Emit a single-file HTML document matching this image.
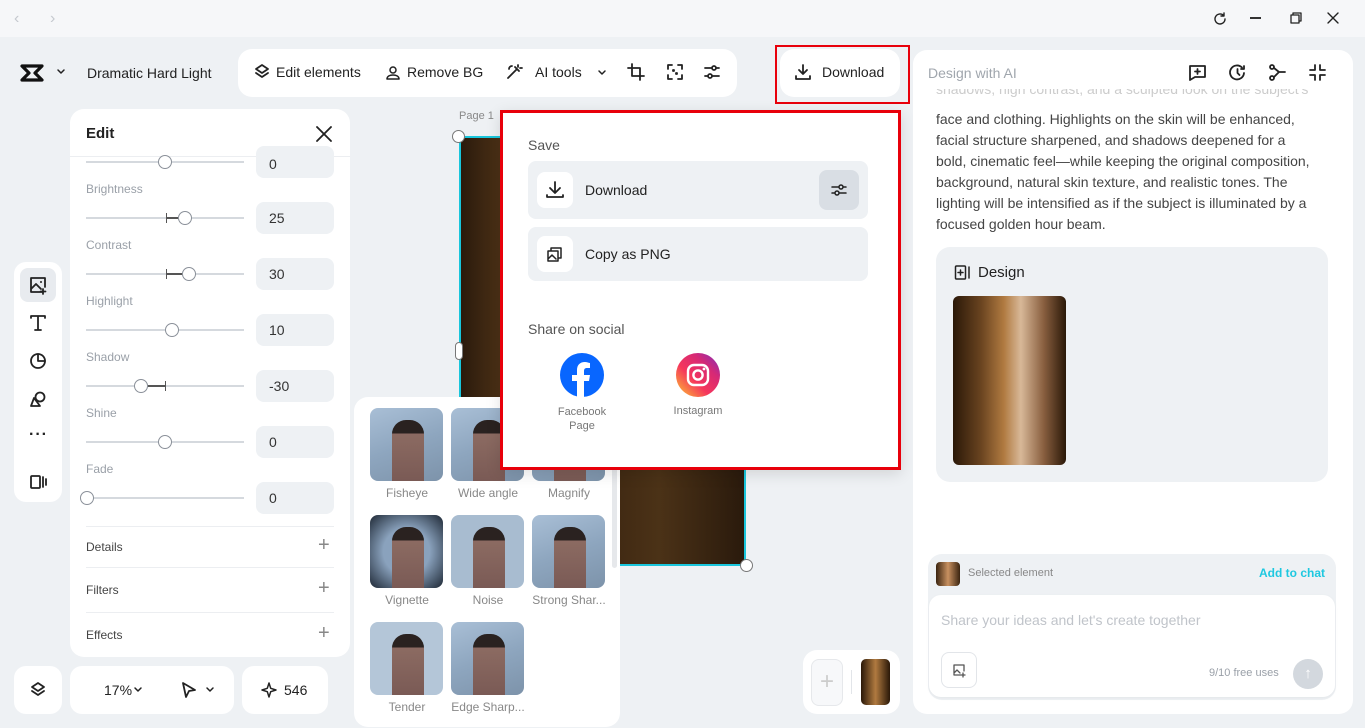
<!DOCTYPE html>
<html><head><meta charset="utf-8"><style>
*{box-sizing:border-box;margin:0;padding:0}
body{width:1365px;height:728px;overflow:hidden;background:#eef1f4;font-family:"Liberation Sans",sans-serif;color:#222;position:relative;font-size:14px}
.a{position:absolute}
.w{background:#fff;border-radius:14px}
svg{display:block}
.ic{fill:none;stroke:#222;stroke-width:1.8;stroke-linecap:round;stroke-linejoin:round}
.lbl{font-size:12px;color:#9aa0a8}
.sl{position:absolute;left:16px;width:158px;height:2px;background:#d5d9de}
.kn{position:absolute;width:14px;height:14px;border-radius:50%;border:1px solid #8a9099;background:#fff;top:-6px}
.vb{position:absolute;left:186px;width:78px;height:32px;background:#eef1f4;border-radius:8px;font-size:14px;color:#333;padding:8px 0 0 13px}
.th{position:absolute;width:73px;height:73px;border-radius:8px;background:linear-gradient(160deg,#a9bfd6,#8ea6bf 50%,#7d93aa)}
.th::after{content:"";position:absolute;left:22px;top:12px;width:32px;height:61px;border-radius:14px 14px 0 0;background:linear-gradient(#2a2220 0 22%,#8c6b62 22%,#7a5a55)}
.tl{position:absolute;width:78px;text-align:center;font-size:12px;color:#888;white-space:nowrap;overflow:hidden;text-overflow:ellipsis}
</style></head><body>
<div class="a" style="left:0;top:0;width:1365px;height:37px;background:#f6f7f9"></div>
<div class="a" style="left:14px;top:10px;color:#c5c9cf;font-size:16px">‹</div>
<div class="a" style="left:50px;top:10px;color:#c5c9cf;font-size:16px">›</div>
<svg class="a" style="left:1212px;top:11px" width="16" height="16" viewBox="0 0 16 16"><path class="ic" style="stroke-width:1.4" d="M13 8a5 5 0 1 1-1.5-3.6M12 2v3h-3"/></svg>
<div class="a" style="left:1250px;top:17px;width:11px;height:1.5px;background:#333"></div>
<svg class="a" style="left:1289px;top:11px" width="14" height="14" viewBox="0 0 14 14"><path class="ic" style="stroke-width:1.3" d="M2 4h8v8H2zM4 4V2h8v8h-2"/></svg>
<svg class="a" style="left:1326px;top:11px" width="14" height="14" viewBox="0 0 14 14"><path class="ic" style="stroke-width:1.4" d="M2 2l10 10M12 2L2 12"/></svg>

<svg class="a" style="left:20px;top:63px" width="24" height="20" viewBox="0 0 24 20"><path d="M2 3h20l-7 7 7 7H2l7-7z" fill="none" stroke="#111" stroke-width="3.2" stroke-linejoin="round"/></svg>
<svg class="a" style="left:56px;top:68px" width="10" height="8" viewBox="0 0 10 8"><path class="ic" style="stroke-width:1.5" d="M2 2l3 3 3-3"/></svg>
<div class="a" style="left:87px;top:65px;font-size:14px;color:#222">Dramatic Hard Light</div>

<div class="a w" style="left:238px;top:49px;width:499px;height:48px"></div>
<svg class="a" style="left:253px;top:63px" width="18" height="18" viewBox="0 0 18 18"><path class="ic" d="M9 2l6 4-6 4-6-4zM3 10l6 4 6-4"/></svg>
<div class="a" style="left:276px;top:64px">Edit elements</div>
<svg class="a" style="left:385px;top:64px" width="16" height="17" viewBox="0 0 16 17"><circle class="ic" style="stroke-width:1.5" cx="8" cy="6" r="3"/><path class="ic" style="stroke-width:1.5" d="M2 15c0-3 3-4 6-4s6 1 6 4z"/></svg>
<div class="a" style="left:407px;top:64px">Remove BG</div>
<svg class="a" style="left:505px;top:63px" width="18" height="18" viewBox="0 0 18 18"><path class="ic" d="M3 15l9-9M10 4l4 4M13 2v2M15 5h2M4 6a3 3 0 0 1 3-3"/></svg>
<div class="a" style="left:535px;top:64px">AI tools</div>
<svg class="a" style="left:597px;top:69px" width="10" height="8" viewBox="0 0 10 8"><path class="ic" style="stroke-width:1.5" d="M2 2l3 3 3-3"/></svg>
<svg class="a" style="left:627px;top:63px" width="18" height="18" viewBox="0 0 18 18"><path class="ic" d="M5 1v12h12M1 5h12v12"/></svg>
<svg class="a" style="left:666px;top:63px" width="18" height="18" viewBox="0 0 18 18"><path class="ic" d="M2 6V2h4M12 2h4v4M16 12v4h-4M6 16H2v-4M7 7h1v1H7zM10 10h1v1h-1z"/></svg>
<svg class="a" style="left:703px;top:63px" width="18" height="18" viewBox="0 0 18 18"><path class="ic" d="M2 5h14M2 13h14"/><circle cx="11" cy="5" r="2" fill="#fff" stroke="#222" stroke-width="1.8"/><circle cx="7" cy="13" r="2" fill="#fff" stroke="#222" stroke-width="1.8"/></svg>

<div class="a w" style="left:780px;top:49px;width:120px;height:48px"></div>
<div class="a" style="left:775px;top:45px;width:135px;height:59px;border:2px solid #e8000b"></div>
<svg class="a" style="left:794px;top:63px" width="18" height="18" viewBox="0 0 18 18"><path class="ic" d="M9 2v9M5 7l4 4 4-4M2 13v3h14v-3"/></svg>
<div class="a" style="left:822px;top:64px">Download</div>

<div class="a w" style="left:70px;top:109px;width:280px;height:548px"></div>
<div class="a" style="left:86px;top:125px;font-size:15px;font-weight:bold">Edit</div>
<svg class="a" style="left:315px;top:125px" width="18" height="18" viewBox="0 0 18 18"><path class="ic" d="M2 2l14 14M16 2L2 16"/></svg>
<div class="a" style="left:70px;top:156px;width:280px;height:1px;background:#eceef1"></div>
<div class="a" style="left:70px;top:144px;width:280px">
 <div class="sl" style="top:17px"><div class="kn" style="left:72px"></div></div><div class="vb" style="top:2px;padding-top:10px">0</div>
 <div class="a lbl" style="left:16px;top:38px">Brightness</div>
 <div class="sl" style="top:73px"><div class="a" style="left:80px;top:-4px;width:1px;height:10px;background:#555"></div><div class="a" style="left:80px;width:12px;height:2px;background:#555"></div><div class="kn" style="left:92px"></div></div><div class="vb" style="top:58px">25</div>
 <div class="a lbl" style="left:16px;top:94px">Contrast</div>
 <div class="sl" style="top:129px"><div class="a" style="left:80px;top:-4px;width:1px;height:10px;background:#555"></div><div class="a" style="left:80px;width:16px;height:2px;background:#555"></div><div class="kn" style="left:96px"></div></div><div class="vb" style="top:114px">30</div>
 <div class="a lbl" style="left:16px;top:150px">Highlight</div>
 <div class="sl" style="top:185px"><div class="kn" style="left:79px"></div></div><div class="vb" style="top:170px">10</div>
 <div class="a lbl" style="left:16px;top:206px">Shadow</div>
 <div class="sl" style="top:241px"><div class="a" style="left:62px;width:17px;height:2px;background:#555"></div><div class="a" style="left:79px;top:-4px;width:1px;height:10px;background:#555"></div><div class="kn" style="left:48px"></div></div><div class="vb" style="top:226px">-30</div>
 <div class="a lbl" style="left:16px;top:262px">Shine</div>
 <div class="sl" style="top:297px"><div class="kn" style="left:72px"></div></div><div class="vb" style="top:282px">0</div>
 <div class="a lbl" style="left:16px;top:318px">Fade</div>
 <div class="sl" style="top:353px"><div class="kn" style="left:-6px"></div></div><div class="vb" style="top:338px">0</div>
</div>
<div class="a" style="left:86px;top:526px;width:248px;height:1px;background:#eceef1"></div>
<div class="a" style="left:86px;top:540px;font-size:12px;color:#444">Details</div><div class="a" style="left:318px;top:534px;font-size:20px;color:#888">+</div>
<div class="a" style="left:86px;top:567px;width:248px;height:1px;background:#eceef1"></div>
<div class="a" style="left:86px;top:583px;font-size:12px;color:#444">Filters</div><div class="a" style="left:318px;top:577px;font-size:20px;color:#888">+</div>
<div class="a" style="left:86px;top:612px;width:248px;height:1px;background:#eceef1"></div>
<div class="a" style="left:86px;top:628px;font-size:12px;color:#444">Effects</div><div class="a" style="left:318px;top:622px;font-size:20px;color:#888">+</div>

<div class="a w" style="left:14px;top:262px;width:48px;height:240px;border-radius:12px"></div>
<div class="a" style="left:20px;top:268px;width:36px;height:34px;background:#e8ebef;border-radius:8px"></div>
<svg class="a" style="left:28px;top:275px" width="20" height="20" viewBox="0 0 20 20"><path class="ic" d="M14 17H3V3h14v9M3 14l5-5 5 5M15 14v5M12.5 16.5h5"/><circle cx="13" cy="7" r="1" fill="#222"/></svg>
<svg class="a" style="left:29px;top:314px" width="18" height="18" viewBox="0 0 18 18"><path class="ic" d="M2 4V2h14v2M9 2v14M6 16h6"/></svg>
<svg class="a" style="left:29px;top:352px" width="18" height="18" viewBox="0 0 18 18"><path class="ic" d="M9 2a7 7 0 1 0 7 7H9z"/><path class="ic" d="M9 2a7 7 0 0 1 7 7"/></svg>
<svg class="a" style="left:29px;top:390px" width="18" height="18" viewBox="0 0 18 18"><circle class="ic" cx="11" cy="7" r="4.5"/><path class="ic" d="M5 8l-3 8h9z"/></svg>
<div class="a" style="left:29px;top:426px;font-size:16px;font-weight:bold;letter-spacing:1px">···</div>
<svg class="a" style="left:29px;top:473px" width="18" height="18" viewBox="0 0 18 18"><rect class="ic" x="2" y="3" width="9" height="12" rx="1"/><path class="ic" d="M14 4v10M17 6v6"/></svg>

<div class="a" style="left:459px;top:110px;font-size:11px;color:#888">Page 1</div>
<div class="a" style="left:459px;top:136px;width:287px;height:430px;background:linear-gradient(90deg,#2a1a0c,#5a3a1a 20%,#3a2410 45%,#4b3217 70%,#2a1a0c);border:2px solid #19c6dc"></div>
<div class="a" style="left:452px;top:130px;width:13px;height:13px;border-radius:50%;background:#fff;border:1px solid #777"></div>
<div class="a" style="left:740px;top:559px;width:13px;height:13px;border-radius:50%;background:#fff;border:1px solid #777"></div>
<div class="a" style="left:455px;top:342px;width:8px;height:18px;border-radius:4px;background:#fff;border:1px solid #777"></div>

<div class="a w" style="left:354px;top:397px;width:266px;height:330px"></div>
<div class="th" style="left:370px;top:408px"></div><div class="tl" style="left:368px;top:486px">Fisheye</div>
<div class="th" style="left:451px;top:408px"></div><div class="tl" style="left:449px;top:486px">Wide angle</div>
<div class="th" style="left:532px;top:408px"></div><div class="tl" style="left:530px;top:486px">Magnify</div>
<div class="th" style="left:370px;top:515px;background:radial-gradient(#8aa2bd 45%,#1e2835)"></div><div class="tl" style="left:368px;top:593px">Vignette</div>
<div class="th" style="left:451px;top:515px;background:#a8bcd0"></div><div class="tl" style="left:449px;top:593px">Noise</div>
<div class="th" style="left:532px;top:515px"></div><div class="tl" style="left:530px;top:593px">Strong Shar...</div>
<div class="th" style="left:370px;top:622px;background:#b4c6d8"></div><div class="tl" style="left:368px;top:700px">Tender</div>
<div class="th" style="left:451px;top:622px"></div><div class="tl" style="left:449px;top:700px">Edge Sharp...</div>
<div class="a" style="left:612px;top:400px;width:5px;height:168px;background:#e6e8eb;border-radius:3px"></div>

<div class="a" style="left:500px;top:110px;width:401px;height:360px;background:#fff;border:3px solid #e8000b;box-shadow:0 4px 14px rgba(0,0,0,.12)"></div>
<div class="a" style="left:528px;top:137px;color:#555">Save</div>
<div class="a" style="left:528px;top:161px;width:340px;height:58px;background:#eef1f4;border-radius:8px"></div>
<div class="a" style="left:537px;top:172px;width:36px;height:36px;background:#fff;border-radius:8px"></div>
<svg class="a" style="left:545px;top:180px" width="20" height="20" viewBox="0 0 20 20"><path class="ic" d="M10 2v11M5 8l5 5 5-5M2 15v2h16v-2"/></svg>
<div class="a" style="left:585px;top:182px">Download</div>
<div class="a" style="left:819px;top:170px;width:40px;height:40px;background:#d9dee4;border-radius:8px"></div>
<svg class="a" style="left:829px;top:180px" width="20" height="20" viewBox="0 0 20 20"><path class="ic" style="stroke-width:1.5" d="M3 7h14M3 13h14"/><circle cx="12" cy="7" r="2" fill="#d9dee4" stroke="#222" stroke-width="1.5"/><circle cx="8" cy="13" r="2" fill="#d9dee4" stroke="#222" stroke-width="1.5"/></svg>
<div class="a" style="left:528px;top:227px;width:340px;height:54px;background:#eef1f4;border-radius:8px"></div>
<div class="a" style="left:537px;top:236px;width:36px;height:36px;background:#fff;border-radius:8px"></div>
<svg class="a" style="left:546px;top:245px" width="18" height="18" viewBox="0 0 18 18"><path class="ic" style="stroke-width:1.5" d="M2 6h10v10H2zM5 6V3h10v10h-3M2 14l4-4 4 4"/></svg>
<div class="a" style="left:585px;top:246px">Copy as PNG</div>
<div class="a" style="left:528px;top:321px;color:#555">Share on social</div>
<svg class="a" style="left:560px;top:353px" width="44" height="44" viewBox="0 0 44 44"><circle cx="22" cy="22" r="22" fill="#0866ff"/><path d="M24 44V28h5l1-6h-6v-4c0-2 1-3 3-3h3v-5c-1 0-3-1-5-1-5 0-8 3-8 8v5h-5v6h5v16z" fill="#fff"/></svg>
<div class="a" style="left:542px;top:405px;width:80px;text-align:center;font-size:11px;color:#777;line-height:14px">Facebook<br>Page</div>
<svg class="a" style="left:676px;top:353px" width="44" height="44" viewBox="0 0 44 44"><defs><linearGradient id="ig" x1="0" y1="1" x2="1" y2="0"><stop offset="0" stop-color="#fdc830"/><stop offset=".4" stop-color="#f5365c"/><stop offset=".7" stop-color="#d62976"/><stop offset="1" stop-color="#7b2fbf"/></linearGradient></defs><circle cx="22" cy="22" r="22" fill="url(#ig)"/><rect x="12" y="12" width="20" height="20" rx="6" fill="none" stroke="#fff" stroke-width="2.4"/><circle cx="22" cy="22" r="4.6" fill="none" stroke="#fff" stroke-width="2.4"/><circle cx="28" cy="16" r="1.4" fill="#fff"/></svg>
<div class="a" style="left:658px;top:405px;width:80px;text-align:center;font-size:11px;color:#777">Instagram</div>

<div class="a w" style="left:913px;top:50px;width:440px;height:664px"></div>
<div class="a" style="left:928px;top:65px;color:#a0a6ad">Design with AI</div>
<svg class="a" style="left:1188px;top:63px" width="19" height="19" viewBox="0 0 19 19"><path class="ic" d="M2 3h15v11H7l-5 3zM9.5 6v5M7 8.5h5"/></svg>
<svg class="a" style="left:1228px;top:63px" width="19" height="19" viewBox="0 0 19 19"><path class="ic" d="M16 10a7 7 0 1 1-2-5.5M16 3v3h-3M9.5 6v4l2 2"/></svg>
<svg class="a" style="left:1268px;top:63px" width="19" height="19" viewBox="0 0 19 19"><circle class="ic" cx="4" cy="4" r="2"/><circle class="ic" cx="4" cy="15" r="2"/><path class="ic" d="M6 5l5 4h6M6 14l5-5"/></svg>
<svg class="a" style="left:1308px;top:63px" width="19" height="19" viewBox="0 0 19 19"><path class="ic" d="M7 2v5H2M12 2v5h5M7 17v-5H2M12 17v-5h5"/></svg>
<div class="a" style="left:936px;top:89px;width:400px;height:12px;overflow:hidden;color:#ccc;font-size:14px;line-height:21px;white-space:nowrap"><div style="margin-top:-10px">shadows, high contrast, and a sculpted look on the subject's</div></div>
<div class="a" style="left:936px;top:109px;width:420px;font-size:14px;line-height:21px;color:#444;white-space:nowrap">face and clothing. Highlights on the skin will be enhanced,<br>facial structure sharpened, and shadows deepened for a<br>bold, cinematic feel—while keeping the original composition,<br>background, natural skin texture, and realistic tones. The<br>lighting will be intensified as if the subject is illuminated by a<br>focused golden hour beam.</div>
<div class="a" style="left:936px;top:247px;width:392px;height:235px;background:#eef1f4;border-radius:14px"></div>
<svg class="a" style="left:954px;top:264px" width="18" height="17" viewBox="0 0 18 17"><rect class="ic" style="stroke-width:1.5" x="1.5" y="2" width="10" height="13" rx="1"/><path class="ic" style="stroke-width:1.5" d="M6.5 6v5M4 8.5h5M15 3v11"/></svg>
<div class="a" style="left:978px;top:264px;font-size:15px">Design</div>
<div class="a" style="left:953px;top:296px;width:113px;height:169px;border-radius:6px;background:linear-gradient(90deg,#2a1808,#6a4420 25%,#b07a40 45%,#d8b898 60%,#8a6040 80%,#2a1808)"></div>

<div class="a" style="left:928px;top:554px;width:408px;height:146px;background:#eef1f4;border-radius:14px"></div>
<div class="a" style="left:936px;top:562px;width:24px;height:24px;border-radius:4px;background:linear-gradient(90deg,#3a2410,#c89060,#3a2410)"></div>
<div class="a" style="left:968px;top:567px;font-size:11px;color:#888">Selected element</div>
<div class="a" style="left:1259px;top:566px;font-size:12px;color:#1ec8e0;font-weight:bold">Add to chat</div>
<div class="a" style="left:929px;top:595px;width:406px;height:102px;background:#fff;border-radius:12px;box-shadow:0 1px 3px rgba(0,0,0,.05)"></div>
<div class="a" style="left:941px;top:612px;color:#c0c4ca">Share your ideas and let's create together</div>
<div class="a" style="left:941px;top:652px;width:36px;height:36px;border:1px solid #e2e5e9;border-radius:8px"></div>
<svg class="a" style="left:952px;top:663px" width="15" height="15" viewBox="0 0 15 15"><path class="ic" style="stroke-width:1.3;stroke:#555" d="M10 12H2V2h10v6M2 10l3-3 3 3M11 10v4M9 12h4"/></svg>
<div class="a" style="left:1209px;top:667px;font-size:11px;color:#9aa0a8">9/10 free uses</div>
<div class="a" style="left:1293px;top:659px;width:30px;height:30px;border-radius:50%;background:#d3d8de;color:#fff;text-align:center;font-size:15px;line-height:30px">↑</div>

<div class="a w" style="left:14px;top:666px;width:48px;height:48px;border-radius:12px"></div>
<svg class="a" style="left:29px;top:681px" width="18" height="18" viewBox="0 0 18 18"><path class="ic" d="M9 2l6 4-6 4-6-4zM3 10l6 4 6-4"/></svg>
<div class="a w" style="left:70px;top:666px;width:164px;height:48px;border-radius:12px"></div>
<div class="a" style="left:104px;top:682px">17%</div>
<svg class="a" style="left:133px;top:686px" width="10" height="8" viewBox="0 0 10 8"><path class="ic" style="stroke-width:1.5" d="M2 2l3 3 3-3"/></svg>
<svg class="a" style="left:180px;top:681px" width="18" height="18" viewBox="0 0 18 18"><path class="ic" d="M3 2l12 7-6 1-3 6z"/></svg>
<svg class="a" style="left:205px;top:686px" width="10" height="8" viewBox="0 0 10 8"><path class="ic" style="stroke-width:1.5" d="M2 2l3 3 3-3"/></svg>
<div class="a w" style="left:242px;top:666px;width:86px;height:48px;border-radius:12px"></div>
<svg class="a" style="left:261px;top:682px" width="16" height="16" viewBox="0 0 16 16"><path d="M8 1l1.7 5.3L15 8l-5.3 1.7L8 15l-1.7-5.3L1 8l5.3-1.7z" fill="none" stroke="#222" stroke-width="1.5" stroke-linejoin="round"/></svg>
<div class="a" style="left:284px;top:682px">546</div>
<div class="a w" style="left:803px;top:650px;width:97px;height:64px;border-radius:14px"></div>
<div class="a" style="left:811px;top:659px;width:32px;height:47px;border:1px solid #e6e8eb;background:#f7f8fa;border-radius:8px;color:#ccc;font-size:24px;text-align:center;line-height:44px">+</div>
<div class="a" style="left:851px;top:670px;width:1px;height:24px;background:#e2e5e9"></div>
<div class="a" style="left:861px;top:659px;width:29px;height:46px;border-radius:5px;background:linear-gradient(90deg,#2a1808,#b07a40 50%,#2a1808)"></div>
</body></html>
